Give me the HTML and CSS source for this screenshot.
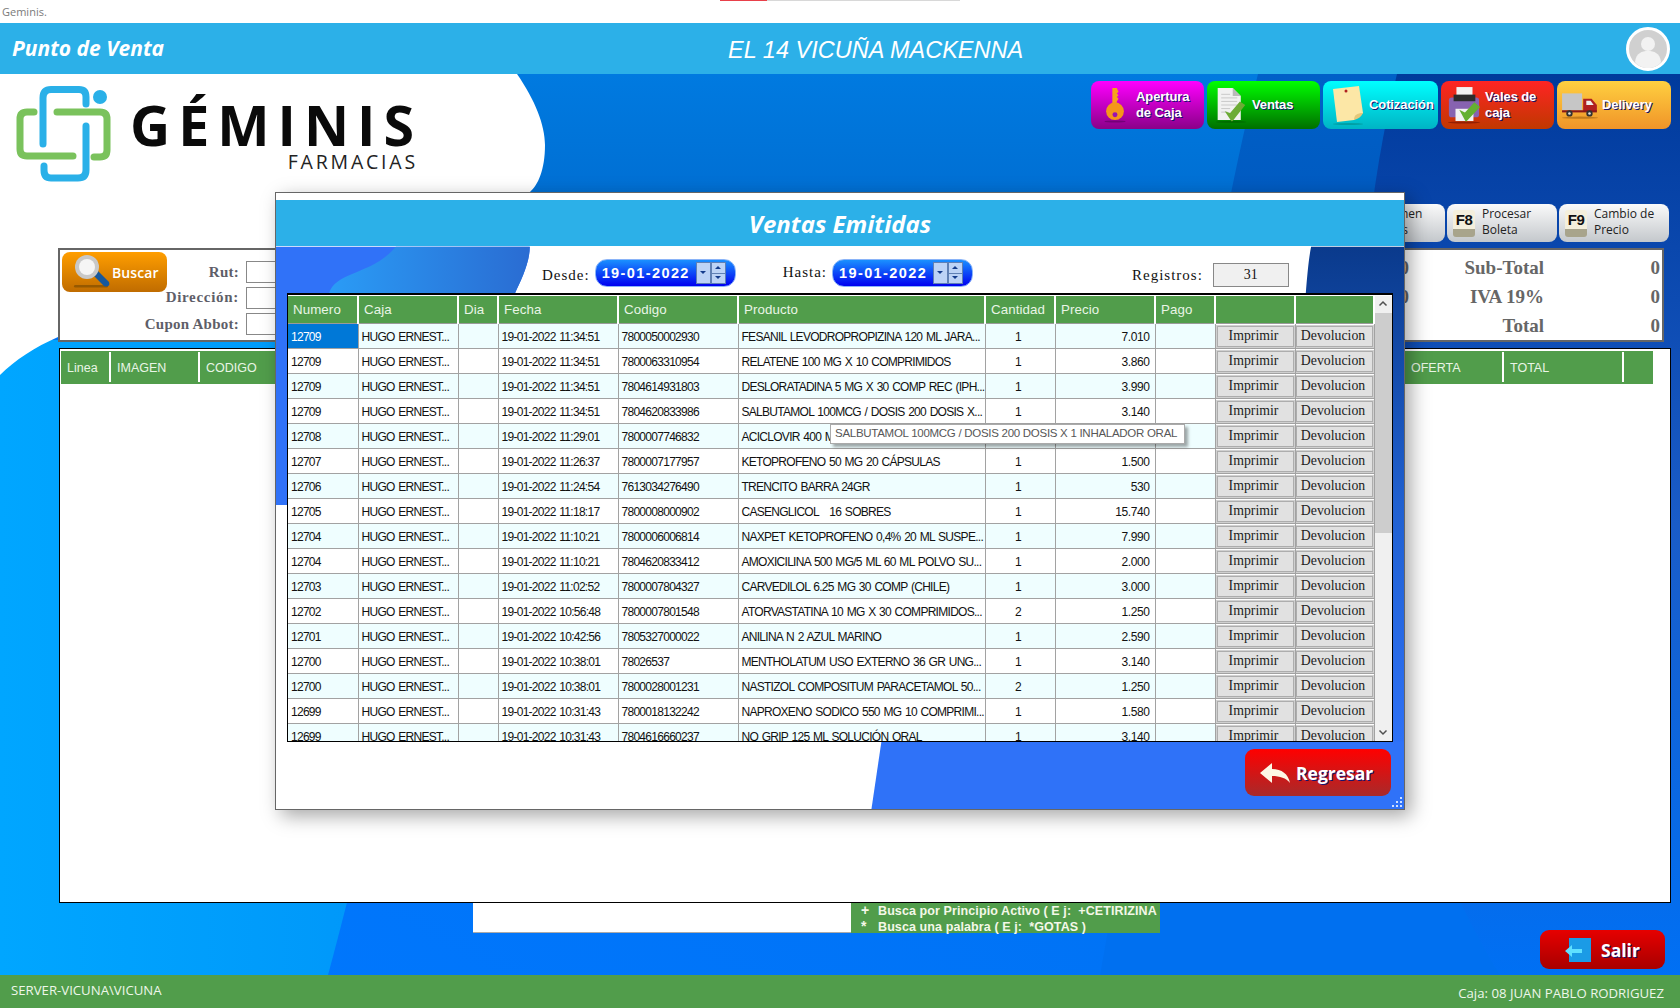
FILE: index.html
```html
<!DOCTYPE html>
<html lang="es">
<head>
<meta charset="utf-8">
<title>Geminis.</title>
<link rel="stylesheet" href="styles.css">
</head>
<body>
<div class="app">
  <div class="titlebar">
    <span>Geminis.</span>
    <div class="progress"><i></i></div>
  </div>
  <header class="header">
    <div class="brand">Punto de Venta</div>
    <div class="branch">EL 14 VICUÑA MACKENNA</div>
    <svg class="avatar" viewBox="0 0 44 44"><circle cx="22" cy="22" r="20.5" fill="#d0d0d0" stroke="#fff" stroke-width="3"/><circle cx="22" cy="17" r="7" fill="#f2f2f2"/><path d="M9 35c1-9 7-11 13-11s12 2 13 11c-3 4-8 6-13 6s-10-2-13-6z" fill="#f2f2f2"/></svg>
  </header>

  <main class="main">
    <svg class="art" viewBox="0 74 1680 901" preserveAspectRatio="none">
      <defs>
        <linearGradient id="bgbase" x1="0" y1="1" x2="1" y2="0"><stop offset="0" stop-color="#0078ff"/><stop offset=".55" stop-color="#0070f0"/><stop offset="1" stop-color="#0058c8"/></linearGradient>
        <linearGradient id="bgmid" x1="0" y1="0" x2="0" y2="1"><stop offset="0" stop-color="#0060c8"/><stop offset=".3" stop-color="#0054b8"/><stop offset=".9" stop-color="#0070f0"/></linearGradient>
        <linearGradient id="bgdark" x1="0" y1="0" x2="0" y2="1"><stop offset="0" stop-color="#003a9c"/><stop offset=".5" stop-color="#1a5cc8"/><stop offset="1" stop-color="#0070f4"/></linearGradient>
        <linearGradient id="bgtop" x1="0" y1="0" x2="0" y2="1"><stop offset="0" stop-color="#007ae0"/><stop offset="1" stop-color="#0062c4"/></linearGradient>
        <linearGradient id="bgleft" x1="0" y1="0" x2="1" y2="0"><stop offset="0" stop-color="#00a6ff"/><stop offset="1" stop-color="#0094f8"/></linearGradient>
      </defs>
      <rect x="0" y="74" width="1680" height="901" fill="url(#bgbase)"/>
      <path d="M0 340H460C420 600 370 820 328 975H0Z" fill="url(#bgleft)"/>
      <path d="M500 74H1300L1200 340H500Z" fill="url(#bgtop)"/>
      <path d="M1258 74H1680V975H1100C1150 700 1200 300 1258 74Z" fill="url(#bgmid)"/>
      <path d="M1397 74H1680V975H1500C1330 700 1340 300 1397 74Z" fill="url(#bgdark)"/>
      <path d="M0 74H517C535 100 545 125 545 145C545 170 538 185 530 192C470 250 150 290 58 337C35 347 15 360 0 375Z" fill="#fff"/>
    </svg>

    <div class="top-row">
      <div class="logo">
        <svg class="logo-mark" viewBox="0 0 112 112">
          <g fill="none" stroke-width="7" stroke-linecap="round" stroke-linejoin="round">
            <path d="M42 58V12Q42 3.500 50 3.500H78Q85 3.500 85 11V18" stroke="#2ab0e8"/>
            <path d="M85 40V84Q85 92 77 92H50Q43 92 43 84V80" stroke="#2ab0e8"/>
            <path d="M56 26H99Q106 26 106 33V64Q106 71 99 71H93" stroke="#7ac25c"/>
            <path d="M33 26H26Q19 26 19 33V63Q19 70 26 70H72" stroke="#7ac25c"/>
          </g>
          <circle cx="99" cy="11" r="7" fill="#2ab0e8"/>
        </svg>
        <div class="logo-text">
          <div class="logo-name">GÉMINIS</div>
          <div class="logo-sub">FARMACIAS</div>
        </div>
      </div>
      <nav class="actions">
        <a class="action a-magenta">
          <svg class="a-icon" viewBox="0 0 36 40"><path d="M15 1h5l2 4-2 2 2 2-2 2 2 2-2 3v4h-5z" fill="#f7a21c"/><circle cx="18" cy="27" r="10" fill="#f5961a"/><circle cx="18" cy="31" r="2.800" fill="#9a12b0"/><ellipse cx="18" cy="38.500" rx="12" ry="1.200" fill="#5a0060" opacity=".6"/></svg>
          <span class="a-label">Apertura<br>de Caja</span>
        </a>
        <a class="action a-green">
          <svg class="a-icon" viewBox="0 0 36 40"><path d="M3 1h17l9 9v27H3z" fill="#f1f1f1"/><path d="M20 1l9 9h-9z" fill="#b9b9b9"/><path d="M7 8h10M7 12h18M7 16h18M7 20h18M7 24h10M7 28h7" stroke="#c4c4c4" stroke-width="1"/><path d="M11 27l6 2 11-13 6 4-15 19z" fill="#6cab36"/><ellipse cx="18" cy="39" rx="17" ry="1" fill="#005000" opacity=".5"/></svg>
          <span class="a-label">Ventas</span>
        </a>
        <a class="action a-cyan">
          <svg class="a-icon" viewBox="0 0 36 40"><path d="M4 4l26-3 4 27-9 7-17 2z" fill="#fce7a6"/><path d="M25 35c0-5 3-7 9-7-2 4-5 6-9 7z" fill="#e4c87a"/><circle cx="17" cy="6" r="1.500" fill="#b02020"/><ellipse cx="19" cy="39" rx="15" ry="1" fill="#008c8c" opacity=".6"/></svg>
          <span class="a-label">Cotización</span>
        </a>
        <a class="action a-red">
          <svg class="a-icon" viewBox="0 0 36 40"><rect x="10" y="1" width="17" height="12" fill="#f2f2f2"/><path d="M2 15q0-3 3-3h26q3 0 3 3v15q0 3-3 3H5q-3 0-3-3z" fill="#8763b0"/><rect x="7" y="9" width="23" height="7" fill="#2c2c2c"/><rect x="9" y="24" width="19" height="13" fill="#f2f2f2"/><path d="M13 25l6 3 10-11 6 5-15 16z" fill="#64b030"/><ellipse cx="18" cy="38.500" rx="17" ry="1" fill="#701000" opacity=".6"/></svg>
          <span class="a-label">Vales de<br>caja</span>
        </a>
        <a class="action a-orange">
          <svg class="a-icon" viewBox="0 0 36 28"><rect x="1" y="3" width="19" height="16" fill="#c6c6c6"/><path d="M21 8h8l5 6v6H21z" fill="#b02020"/><path d="M24 10h4l3 4h-7z" fill="#eee"/><rect x="1" y="19" width="33" height="2" fill="#8a1818"/><circle cx="8" cy="22" r="3" fill="#333"/><circle cx="8" cy="22" r="1.200" fill="#ddd"/><circle cx="27" cy="22" r="3" fill="#333"/><circle cx="27" cy="22" r="1.200" fill="#ddd"/><ellipse cx="18" cy="26" rx="17" ry="1" fill="#a06010" opacity=".6"/></svg>
          <span class="a-label">Delivery</span>
        </a>
      </nav>
    </div>

    <div class="fkeys">
      <a class="fkey"><span class="cap">F7</span><span class="fkey-label">Resumen<br>Ventas</span></a>
      <a class="fkey"><span class="cap">F8</span><span class="fkey-label">Procesar<br>Boleta</span></a>
      <a class="fkey"><span class="cap">F9</span><span class="fkey-label">Cambio de<br>Precio</span></a>
    </div>

    <section class="form-panel">
      <a class="search-btn">
        <svg class="lens" viewBox="0 0 40 36"><rect x="2" y="31" width="34" height="2.500" rx="1.200" fill="#8a5200" opacity=".8"/><path d="M21 21l5-4 11 11q1 3-1 4t-4 0z" fill="#17589c"/><circle cx="15" cy="13" r="12" fill="#c8c8c8"/><circle cx="15" cy="13" r="8" fill="#f5f5f5"/></svg>
        <span>Buscar</span>
      </a>
      <div class="fields">
        <label>Rut:</label><span class="box"></span>
        <label class="lab-dir">Dirección:</label><span class="box"></span>
        <label>Cupon Abbot:</label><span class="box"></span>
      </div>
      <div class="totals">
        <span class="tz">0</span><span class="tl">Sub-Total</span><span class="tv">0</span>
        <span class="tz">0</span><span class="tl">IVA 19%</span><span class="tv">0</span>
        <span class="tz"></span><span class="tl">Total</span><span class="tv">0</span>
      </div>
    </section>

    <section class="lines-panel">
      <div class="lines-head">
        <span class="lh-linea">Linea</span><span class="lh-imagen">IMAGEN</span><span class="lh-codigo">CODIGO</span><span class="lh-oferta">OFERTA</span><span class="lh-total">TOTAL</span><span class="lh-end"></span>
      </div>
    </section>

    <div class="bottom-row">
      <div class="search-input"></div>
      <div class="help">
        <div><b>+</b>Busca por Principio Activo ( E j:&nbsp; +CETIRIZINA</div>
        <div><b>*</b>Busca una palabra ( E j:&nbsp; *GOTAS )</div>
      </div>
      <a class="exit-btn">
        <svg class="exit-icon" viewBox="0 0 26 24"><rect x="4" y="0" width="22" height="24" fill="#1b9be6"/><path d="M0 13l7-6v4h10v4H7v4z" fill="#5fe0ff"/></svg>
        <span>Salir</span>
      </a>
    </div>
  </main>

  <footer class="footer">
    <span class="f-left">SERVER-VICUNA\VICUNA</span>
    <span class="f-right">Caja: 08 JUAN PABLO RODRIGUEZ</span>
  </footer>

  <div class="modal">
    <svg class="modal-art" viewBox="275 192 1129 618" preserveAspectRatio="none">
      <defs>
        <linearGradient id="mwave" x1="0" y1="0" x2="1" y2="0"><stop offset="0" stop-color="#2a9cf6"/><stop offset="1" stop-color="#2a6cd2"/></linearGradient>
        <linearGradient id="mright" x1="0" y1="0" x2="0" y2="1"><stop offset="0" stop-color="#0a3a8c"/><stop offset=".5" stop-color="#2060d0"/><stop offset="1" stop-color="#2f72f8"/></linearGradient>
      </defs>
      <rect x="275" y="192" width="1129" height="618" fill="#fff"/>
      <path d="M275 246H529C529 262 520 280 514 293L400 400L300 460L286 505H275Z" fill="#3072f8"/>
      <path d="M395 246H529C529 262 520 280 514 293L400 293H328C335 270 370 275 395 246Z" fill="url(#mwave)"/>
      <path d="M1311 246H1404V760H1290C1296 560 1300 300 1311 246Z" fill="url(#mright)"/>
      <path d="M881 742H1404V810H871Z" fill="#2f72f8"/>
      <path d="M1392 808h2v-2h-2zM1396 808h2v-2h-2zM1400 808h2v-2h-2zM1396 804h2v-2h-2zM1400 804h2v-2h-2zM1400 800h2v-2h-2z" fill="#cfe0ff"/>
    </svg>
    <div class="modal-head">Ventas Emitidas</div>
    <div class="filters">
      <span class="f-lab lab-desde">Desde:</span>
      <div class="picker">
        <span class="p-val">19-01-2022</span>
        <span class="spin-a"><i class="dn"></i></span>
        <span class="spin-b"><i class="up"></i><i class="dn"></i></span>
      </div>
      <span class="f-lab lab-hasta">Hasta:</span>
      <div class="picker">
        <span class="p-val">19-01-2022</span>
        <span class="spin-a"><i class="dn"></i></span>
        <span class="spin-b"><i class="up"></i><i class="dn"></i></span>
      </div>
      <span class="f-lab lab-reg">Registros:</span>
      <span class="reg-box">31</span>
    </div>
    <div class="table-wrap">
      <div class="table-clip">
        <table class="sales">
          <colgroup><col class="c1"><col class="c2"><col class="c3"><col class="c4"><col class="c5"><col class="c6"><col class="c7"><col class="c8"><col class="c9"><col class="c10"><col class="c11"></colgroup>
          <thead><tr><th>Numero</th><th>Caja</th><th>Dia</th><th>Fecha</th><th>Codigo</th><th>Producto</th><th>Cantidad</th><th>Precio</th><th>Pago</th><th></th><th></th></tr></thead>
          <tbody>
            <tr><td class="sel">12709</td><td>HUGO ERNEST...</td><td></td><td>19-01-2022 11:34:51</td><td>7800050002930</td><td>FESANIL LEVODROPROPIZINA 120 ML JARA...</td><td class="q">1</td><td class="p">7.010</td><td></td><td class="b"><button>Imprimir</button></td><td class="b"><button>Devolucion</button></td></tr>
            <tr><td>12709</td><td>HUGO ERNEST...</td><td></td><td>19-01-2022 11:34:51</td><td>7800063310954</td><td>RELATENE 100 MG X 10 COMPRIMIDOS</td><td class="q">1</td><td class="p">3.860</td><td></td><td class="b"><button>Imprimir</button></td><td class="b"><button>Devolucion</button></td></tr>
            <tr><td>12709</td><td>HUGO ERNEST...</td><td></td><td>19-01-2022 11:34:51</td><td>7804614931803</td><td>DESLORATADINA 5 MG X 30 COMP REC (IPH...</td><td class="q">1</td><td class="p">3.990</td><td></td><td class="b"><button>Imprimir</button></td><td class="b"><button>Devolucion</button></td></tr>
            <tr><td>12709</td><td>HUGO ERNEST...</td><td></td><td>19-01-2022 11:34:51</td><td>7804620833986</td><td>SALBUTAMOL 100MCG / DOSIS 200 DOSIS X...</td><td class="q">1</td><td class="p">3.140</td><td></td><td class="b"><button>Imprimir</button></td><td class="b"><button>Devolucion</button></td></tr>
            <tr><td>12708</td><td>HUGO ERNEST...</td><td></td><td>19-01-2022 11:29:01</td><td>7800007746832</td><td>ACICLOVIR 400 MG</td><td class="q">1</td><td class="p"></td><td></td><td class="b"><button>Imprimir</button></td><td class="b"><button>Devolucion</button></td></tr>
            <tr><td>12707</td><td>HUGO ERNEST...</td><td></td><td>19-01-2022 11:26:37</td><td>7800007177957</td><td>KETOPROFENO 50 MG 20 CÁPSULAS</td><td class="q">1</td><td class="p">1.500</td><td></td><td class="b"><button>Imprimir</button></td><td class="b"><button>Devolucion</button></td></tr>
            <tr><td>12706</td><td>HUGO ERNEST...</td><td></td><td>19-01-2022 11:24:54</td><td>7613034276490</td><td>TRENCITO BARRA 24GR</td><td class="q">1</td><td class="p">530</td><td></td><td class="b"><button>Imprimir</button></td><td class="b"><button>Devolucion</button></td></tr>
            <tr><td>12705</td><td>HUGO ERNEST...</td><td></td><td>19-01-2022 11:18:17</td><td>7800008000902</td><td>CASENGLICOL   16 SOBRES</td><td class="q">1</td><td class="p">15.740</td><td></td><td class="b"><button>Imprimir</button></td><td class="b"><button>Devolucion</button></td></tr>
            <tr><td>12704</td><td>HUGO ERNEST...</td><td></td><td>19-01-2022 11:10:21</td><td>7800006006814</td><td>NAXPET KETOPROFENO 0,4% 20 ML SUSPE...</td><td class="q">1</td><td class="p">7.990</td><td></td><td class="b"><button>Imprimir</button></td><td class="b"><button>Devolucion</button></td></tr>
            <tr><td>12704</td><td>HUGO ERNEST...</td><td></td><td>19-01-2022 11:10:21</td><td>7804620833412</td><td>AMOXICILINA 500 MG/5 ML 60 ML POLVO SU...</td><td class="q">1</td><td class="p">2.000</td><td></td><td class="b"><button>Imprimir</button></td><td class="b"><button>Devolucion</button></td></tr>
            <tr><td>12703</td><td>HUGO ERNEST...</td><td></td><td>19-01-2022 11:02:52</td><td>7800007804327</td><td>CARVEDILOL 6.25 MG 30 COMP (CHILE)</td><td class="q">1</td><td class="p">3.000</td><td></td><td class="b"><button>Imprimir</button></td><td class="b"><button>Devolucion</button></td></tr>
            <tr><td>12702</td><td>HUGO ERNEST...</td><td></td><td>19-01-2022 10:56:48</td><td>7800007801548</td><td>ATORVASTATINA 10 MG X 30 COMPRIMIDOS...</td><td class="q">2</td><td class="p">1.250</td><td></td><td class="b"><button>Imprimir</button></td><td class="b"><button>Devolucion</button></td></tr>
            <tr><td>12701</td><td>HUGO ERNEST...</td><td></td><td>19-01-2022 10:42:56</td><td>7805327000022</td><td>ANILINA N 2 AZUL MARINO</td><td class="q">1</td><td class="p">2.590</td><td></td><td class="b"><button>Imprimir</button></td><td class="b"><button>Devolucion</button></td></tr>
            <tr><td>12700</td><td>HUGO ERNEST...</td><td></td><td>19-01-2022 10:38:01</td><td>78026537</td><td>MENTHOLATUM USO EXTERNO 36 GR UNG...</td><td class="q">1</td><td class="p">3.140</td><td></td><td class="b"><button>Imprimir</button></td><td class="b"><button>Devolucion</button></td></tr>
            <tr><td>12700</td><td>HUGO ERNEST...</td><td></td><td>19-01-2022 10:38:01</td><td>7800028001231</td><td>NASTIZOL COMPOSITUM PARACETAMOL 50...</td><td class="q">2</td><td class="p">1.250</td><td></td><td class="b"><button>Imprimir</button></td><td class="b"><button>Devolucion</button></td></tr>
            <tr><td>12699</td><td>HUGO ERNEST...</td><td></td><td>19-01-2022 10:31:43</td><td>7800018132242</td><td>NAPROXENO SODICO 550 MG 10 COMPRIMI...</td><td class="q">1</td><td class="p">1.580</td><td></td><td class="b"><button>Imprimir</button></td><td class="b"><button>Devolucion</button></td></tr>
            <tr><td>12699</td><td>HUGO ERNEST...</td><td></td><td>19-01-2022 10:31:43</td><td>7804616660237</td><td>NO GRIP 125 ML SOLUCIÓN ORAL</td><td class="q">1</td><td class="p">3.140</td><td></td><td class="b"><button>Imprimir</button></td><td class="b"><button>Devolucion</button></td></tr>
          </tbody>
        </table>
      </div>
      <div class="scrollbar">
        <span class="sb-btn"><svg viewBox="0 0 16 16"><path d="M4.500 9.500L8 6l3.500 3.500" fill="none" stroke="#505050" stroke-width="1.500"/></svg></span>
        <span class="sb-thumb"></span>
        <span class="sb-rest"></span>
        <span class="sb-btn"><svg viewBox="0 0 16 16"><path d="M4.500 6.500L8 10l3.500-3.500" fill="none" stroke="#505050" stroke-width="1.500"/></svg></span>
      </div>
    </div>
    <div class="modal-foot">
      <a class="back-btn">
        <svg class="back-icon" viewBox="0 0 30 20"><path d="M0 10L12 0v6c10 0 16 5 18 14-4-5-10-7-18-7v7z" fill="#fdf8e6"/></svg>
        <span>Regresar</span>
      </a>
    </div>
    <div class="tooltip">SALBUTAMOL 100MCG / DOSIS 200 DOSIS X 1 INHALADOR ORAL</div>
  </div>
</div>
</body>
</html>
```
FILE: styles.css
```css
* { box-sizing: border-box; }
html, body { margin: 0; padding: 0; }
body { font-family: "Liberation Sans", Arial, sans-serif; background: #fff; overflow: hidden; }
.app { position: relative; width: 1680px; height: 1008px; display: flex; flex-direction: column; overflow: hidden; }

.titlebar { position: relative; height: 23px; background: #fff; color: #7a7a7a; font: 11px/24px "Open Sans", sans-serif; padding-left: 2px; }
.progress { position: absolute; left: 720px; top: 0; width: 240px; height: 1px; background: #d8d8d8; }
.progress i { display: block; width: 47px; height: 1px; background: #e8404a; }

.header { height: 51px; background: #2cb0e8; display: flex; align-items: center; padding: 0 10px 0 12px; color: #fff; }
.brand { width: 716px; font: italic 700 21px "Open Sans", sans-serif; margin-bottom: 2px; }
.branch { font: italic 400 23.500px "Liberation Sans", sans-serif; margin-top: 3px; }
.avatar { width: 44px; height: 44px; margin-left: auto; }

.main { position: relative; height: 901px; display: flex; flex-direction: column; }
.art { position: absolute; left: 0; top: 0; width: 1680px; height: 901px; }
.top-row, .fkeys, .form-panel, .lines-panel, .bottom-row { position: relative; }

.top-row { height: 130px; display: flex; justify-content: space-between; padding: 7px 9px 0 0; }
.logo { display: flex; align-items: flex-start; }
.logo-mark { width: 112px; height: 112px; margin-top: 5px; margin-left: 1px; }
.logo-text { margin: 22px 0 0 19px; display: flex; flex-direction: column; align-items: flex-end; width: 283px; }
.logo-name { font: 700 55.500px/44px "Open Sans", sans-serif; letter-spacing: 8px; color: #0a0a0a; margin-right: -7px; white-space: nowrap; }
.logo-sub { font: 400 19.500px/20px "Open Sans", sans-serif; letter-spacing: 2.800px; color: #222; margin-top: 5px; margin-right: -3px; }

.actions { display: flex; gap: 3px; height: 48px; }
.action { width: 113px; height: 48px; border-radius: 8px; display: flex; align-items: center; padding-left: 8px; color: #fff; font: 700 13px/16px "Liberation Sans", sans-serif; letter-spacing: -.1px; text-shadow: 1px 1px 0 #16146e; }
.a-icon { width: 32px; height: 36px; flex: none; margin-right: 5px; }
.a-cyan { width: 115px; padding-left: 6px; }
.a-cyan .a-icon { width: 36px; height: 40px; margin-right: 4px; }
.a-red { padding-left: 6px; }
.a-red .a-icon { width: 34px; height: 38px; margin-right: 4px; }
.a-orange { width: 114px; padding-left: 4px; }
.a-orange .a-icon { width: 38px; height: 30px; margin-right: 3px; }
.a-magenta { background: linear-gradient(#ff00ff, #8a0088); }
.a-green { background: linear-gradient(#00ff00, #006f00); }
.a-cyan { background: linear-gradient(#00ffff, #00b4c4); }
.a-red { background: linear-gradient(#ff2424, #c03800); }
.a-orange { background: linear-gradient(#ffd040, #f09428); }

.fkeys { height: 38px; margin-bottom: 6px; display: flex; justify-content: flex-end; gap: 2px; padding-right: 11px; }
.fkey { width: 110px; height: 38px; border-radius: 8px; background: linear-gradient(#fafafa, #c4c8cc); display: flex; align-items: center; padding: 0 0 2px 6px; color: #222; font: 12px/16px "Open Sans", sans-serif; }
.cap { width: 22px; height: 27px; margin: 3px 7px 0 0; flex: none; background: linear-gradient(#f4efdc 72%, #a8a48c 72%); border-radius: 3px; color: #111; font: 700 15px/20px "Liberation Sans", sans-serif; letter-spacing: -.5px; text-align: center; }

.form-panel { margin-left: 58px; width: 1606px; height: 94px; background: #fff; border: 2px solid #666; display: flex; align-items: flex-start; }
.search-btn { width: 105px; height: 40px; margin: 2px 0 0 2px; flex: none; border-radius: 8px; background: linear-gradient(#ff9e00, #c06c00); display: flex; align-items: center; padding-left: 10px; color: #fff; font: 600 14px "Open Sans", sans-serif; letter-spacing: .1px; }
.lens { width: 40px; height: 36px; margin-right: 0; }
.fields { margin: 11px 0 0 -27px; display: grid; grid-template-columns: 99px 270px; column-gap: 7px; grid-auto-rows: 22px; row-gap: 4px; }
.fields label { font: 700 15px/22px "Liberation Serif", serif; letter-spacing: .25px; color: #5e5e68; text-align: right; white-space: nowrap; }
.fields .lab-dir { letter-spacing: .7px; line-height: 20px; }
.box { border: 1px solid #888; background: #fff; }
.totals { margin: 3px 2px 0 auto; display: grid; grid-template-columns: 60px 135px 116px; grid-auto-rows: 29px; font: 700 19px/29px "Liberation Serif", serif; color: #666; text-align: right; }

.lines-panel { margin-left: 59px; margin-top: 6px; width: 1612px; height: 555px; background: #fff; border: 1px solid #000; padding: 2px 0 0 1px; }
.lines-head { width: 1592px; height: 33px; background: #519d4b; display: flex; color: #e9f5e6; font: 12.500px/33px "Liberation Sans", sans-serif; }
.lines-head span { border-right: 2px solid #fff; padding-left: 6px; height: 30px; margin-top: 1px; line-height: 33px; }
.lh-linea { width: 50px; }
.lh-imagen { width: 89px; }
.lh-codigo { width: 1200px; }
.lh-oferta { width: 104px; }
.lines-head .lh-oferta { padding-left: 11px; }
.lh-total { width: 120px; }
.lines-head .lh-end { border: 0; }

.bottom-row { height: 72px; display: flex; align-items: flex-start; padding-left: 473px; }
.search-input { width: 378px; height: 30px; background: #fff; border-bottom: 1px solid #aaa; }
.help { width: 309px; height: 30px; background: #519d4b; color: #f4f8e8; font: 700 12.500px/15px "Liberation Sans", sans-serif; letter-spacing: .1px; white-space: nowrap; padding-left: 10px; }
.help b { display: inline-block; width: 17px; font-size: 14px; }
.exit-btn { margin: 27px 15px 0 auto; width: 125px; height: 39px; border-radius: 9px; background: linear-gradient(#e60000, #a80000); display: flex; align-items: center; padding-left: 25px; color: #fff; font: 700 17.500px "Open Sans", sans-serif; text-shadow: 1px 1px 0 #16146e; }
.exit-icon { width: 26px; height: 24px; margin-right: 10px; }

.footer { height: 33px; background: #519d4b; color: #eef7ea; font: 13.200px "Open Sans", sans-serif; display: flex; justify-content: space-between; padding: 0 16px 0 11px; }
.f-left { line-height: 31px; }
.f-right { line-height: 37px; }

.modal { position: absolute; left: 275px; top: 192px; width: 1130px; height: 618px; border: 1px solid #666; box-shadow: 6px 6px 18px rgba(0,0,0,.35); display: flex; flex-direction: column; }
.modal-art { position: absolute; left: 0; top: 0; width: 100%; height: 100%; }
.modal-head, .filters, .table-wrap, .modal-foot { position: relative; }
.modal-head { margin-top: 7px; height: 46px; background: #2cb0e8; color: #fff; font: italic 700 24px/48px "Open Sans", sans-serif; text-align: center; }
.filters { height: 47px; display: flex; align-items: center; padding-top: 6px; }
.f-lab { font: 15px "Liberation Serif", serif; letter-spacing: 1px; color: #111; white-space: nowrap; }
.lab-desde { margin-left: 266px; padding-top: 5px; }
.lab-hasta { margin-left: 47px; }
.lab-reg { margin-left: 159px; padding-top: 6px; }
.picker { margin-left: 5px; width: 141px; height: 28px; border-radius: 12px; border: 1px solid #8ab4f8; background: linear-gradient(#1a90ff, #0000f0); display: flex; align-items: center; padding-left: 6px; color: #fff; }
.p-val { width: 94px; font: 700 14.500px "Liberation Sans", sans-serif; letter-spacing: 1.400px; }
.spin-a, .spin-b { width: 15px; height: 22px; background: #bcd3f6; border: 1px solid #5f80b4; display: flex; flex-direction: column; align-items: center; justify-content: space-around; }
.spin-b { background: linear-gradient(#bcd3f6 50%, #5f80b4 50%, #5f80b4 55%, #bcd3f6 55%); }
.spin-a i, .spin-b i { display: block; width: 0; height: 0; border: 3px solid transparent; }
.spin-a .dn, .spin-b .dn { border-top: 3px solid #143c8c; border-bottom: 0; }
.spin-b .up { border-bottom: 3px solid #143c8c; border-top: 0; }
.reg-box { margin-left: 10px; margin-top: 4px; width: 76px; height: 24px; border: 1px solid #888; background: #f0f0f0; font: 14px/22px "Liberation Serif", serif; text-align: center; color: #111; }

.table-wrap { margin-left: 11px; width: 1106px; height: 449px; border: 1px solid #000; border-top-width: 2px; background: #fff; display: flex; padding-top: 1px; }
.table-clip { width: 1087px; height: 445px; overflow: hidden; }
.sales { table-layout: fixed; width: 1086px; border-collapse: collapse; font: 12px "Liberation Sans", sans-serif; letter-spacing: -.72px; word-spacing: 1px; color: #111; }
.c1 { width: 70px; } .c2 { width: 100px; } .c3 { width: 40px; } .c4 { width: 120px; } .c5 { width: 120px; } .c6 { width: 247px; } .c7 { width: 70px; } .c8 { width: 100px; } .c9 { width: 60px; } .c10 { width: 80px; } .c11 { width: 79px; }
.sales th { height: 27px; background: #519d4b; color: #e9f5e6; font: 400 13.300px "Liberation Sans", sans-serif; letter-spacing: .1px; word-spacing: 0; text-align: left; padding: 0 0 0 5px; border-right: 2px solid #fff; border-bottom: 1px solid #9a9a9a; }
.sales td { height: 25px; padding: 2px 0 0 3px; border: 1px solid #a2a2a2; border-width: 0 1px 1px 0; white-space: pre; overflow: hidden; }
.sales tbody tr:nth-child(odd) td { background: #effeff; }
.sales tbody tr:nth-child(odd) td.sel { background: #0078d7; color: #fff; }
.sales td.q { text-align: center; padding: 2px 4px 0 0; }
.sales td.p { text-align: right; padding-right: 5px; letter-spacing: -.4px; }
.sales td.b { padding: 0; text-align: center; background: #fff; }
.sales tbody tr:nth-child(odd) td.b { background: #fff; }
.sales button { display: block; margin: 1px auto 0; width: 77px; height: 21px; padding: 0 3px 0 0; background: #e1e1e1; border: 1px solid #adadad; outline: 1px solid #d0d0d0; font: 13.800px "Liberation Serif", serif; letter-spacing: 0; word-spacing: 0; color: #222; }
.scrollbar { width: 17px; height: 445px; display: flex; flex-direction: column; background: #f0f0f0; }
.sb-btn { height: 17px; flex: none; }
.sb-btn svg { display: block; width: 16px; height: 16px; }
.sb-thumb { height: 220px; background: #cdcdcd; flex: none; }
.sb-rest { flex: 1; }

.modal-foot { display: flex; justify-content: flex-end; padding: 7px 13px 0 0; }
.back-btn { width: 146px; height: 47px; border-radius: 9px; background: linear-gradient(#ff0000, #a82a2a); display: flex; align-items: center; padding-left: 15px; color: #fff; font: 700 17.500px "Open Sans", sans-serif; text-shadow: 1px 1px 0 #16146e; }
.back-icon { width: 30px; height: 20px; margin-right: 6px; }

.tooltip { position: absolute; left: 554px; top: 231px; width: 355px; height: 20px; background: #fff; border: 1px solid #aaa; box-shadow: 3px 3px 3px rgba(0,0,0,.35); color: #575757; font: 11.500px/17px "Liberation Sans", sans-serif; letter-spacing: -.28px; padding-left: 4px; white-space: nowrap; }
```
